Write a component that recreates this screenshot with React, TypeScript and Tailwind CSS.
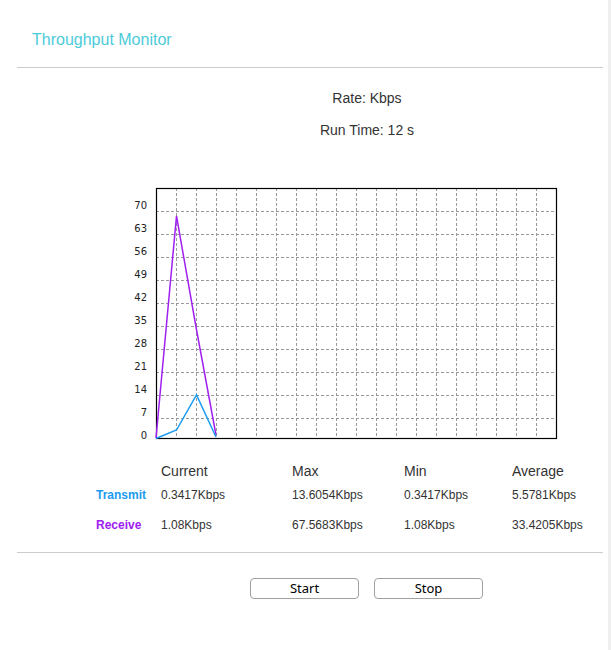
import React from 'react';

const hLines = [211.5, 234.5, 257.5, 280.5, 303.5, 326.5, 349.5, 372.5, 395.5, 418.5];
const vLines = Array.from({ length: 19 }, (_, i) => 176.5 + i * 20);
const yLabels = [70, 63, 56, 49, 42, 35, 28, 21, 14, 7, 0];

const stats = [
  { name: 'Transmit', color: 'text-[#1d9bf0]', values: ['0.3417Kbps', '13.6054Kbps', '0.3417Kbps', '5.5781Kbps'] },
  { name: 'Receive', color: 'text-[#a020f0]', values: ['1.08Kbps', '67.5683Kbps', '1.08Kbps', '33.4205Kbps'] },
];

const Chart: React.FC = () => (
  <svg width={440} height={260} viewBox="120 185 440 260" className="block ml-[120px]">
    {vLines.map((x) => (
      <line key={x} x1={x} y1={188} x2={x} y2={438} stroke="#9a9a9a" strokeWidth={1} strokeDasharray="3 2" />
    ))}
    {hLines.map((y) => (
      <line key={y} x1={156} y1={y} x2={556} y2={y} stroke="#9a9a9a" strokeWidth={1} strokeDasharray="3 2" />
    ))}
    <rect x={156.5} y={188.5} width={400} height={250} fill="none" stroke="#000" strokeWidth={1.2} />
    {yLabels.map((v, i) => (
      <text
        key={v}
        x={147}
        y={209 + i * 23}
        textAnchor="end"
        fontSize={10}
        fontFamily="'DejaVu Sans', sans-serif"
        fill="#222"
      >
        {v}
      </text>
    ))}
    <polyline
      points="156,438 176.5,216 196,327 216,435"
      fill="none"
      stroke="#a020f0"
      strokeWidth={1.5}
    />
    <polyline
      points="156,438.5 176.5,430 196.5,395 216,437"
      fill="none"
      stroke="#1d9bf0"
      strokeWidth={1.5}
    />
  </svg>
);

export default function App() {
  return (
    <div className="flex w-full h-[650px] bg-white font-['Liberation_Sans',Arial,sans-serif] text-[#333]">
      <div className="flex-1 flex flex-col">
        <div className="h-[67px] pl-[32px] pt-[30px]">
          <h1 className="text-[16px] leading-[20px] text-[#4ccbd8]">Throughput Monitor</h1>
        </div>
        <div className="h-px bg-[#cccccc] ml-[17px] mr-[5px]" />

        <div className="pl-[126px] text-center text-[14px] leading-[16px]">
          <p className="mt-[22px] h-[16px]">Rate: Kbps</p>
          <p className="mt-[16px] h-[16px]">Run Time: 12 s</p>
        </div>

        <div className="mt-[47px]">
          <Chart />
        </div>

        <div className="ml-[96px] grid grid-cols-[65px_131px_112px_108px_auto]">
          <div className="mt-[18px] h-[16px]" />
          {['Current', 'Max', 'Min', 'Average'].map((h) => (
            <div key={h} className="mt-[18px] text-[14px] leading-[16px] h-[16px]">
              {h}
            </div>
          ))}
          {stats.map((row, r) => (
            <React.Fragment key={row.name}>
              <div className={`${r === 0 ? 'mt-[9px]' : 'mt-[16px]'} text-[12px] leading-[14px] font-bold ${row.color}`}>
                {row.name}
              </div>
              {row.values.map((v, i) => (
                <div
                  key={i}
                  className={`${r === 0 ? 'mt-[9px]' : 'mt-[16px]'} text-[12px] leading-[14px] whitespace-nowrap`}
                >
                  {v}
                </div>
              ))}
            </React.Fragment>
          ))}
        </div>

        <div className="h-px bg-[#cccccc] ml-[17px] mr-[5px] mt-[20px]" />

        <div className="mt-[25px] pl-[125px] flex justify-center gap-[15px]">
          <button className="w-[109px] h-[21px] rounded-[4px] border border-[#a0a0a0] bg-white text-[13px] leading-[19px] text-black font-['Noto_Sans',sans-serif]">
            Start
          </button>
          <button className="w-[109px] h-[21px] rounded-[4px] border border-[#a0a0a0] bg-white text-[13px] leading-[19px] text-black font-['Noto_Sans',sans-serif]">
            Stop
          </button>
        </div>
      </div>
      <div className="w-[3px] bg-[#efefef]" />
    </div>
  );
}
